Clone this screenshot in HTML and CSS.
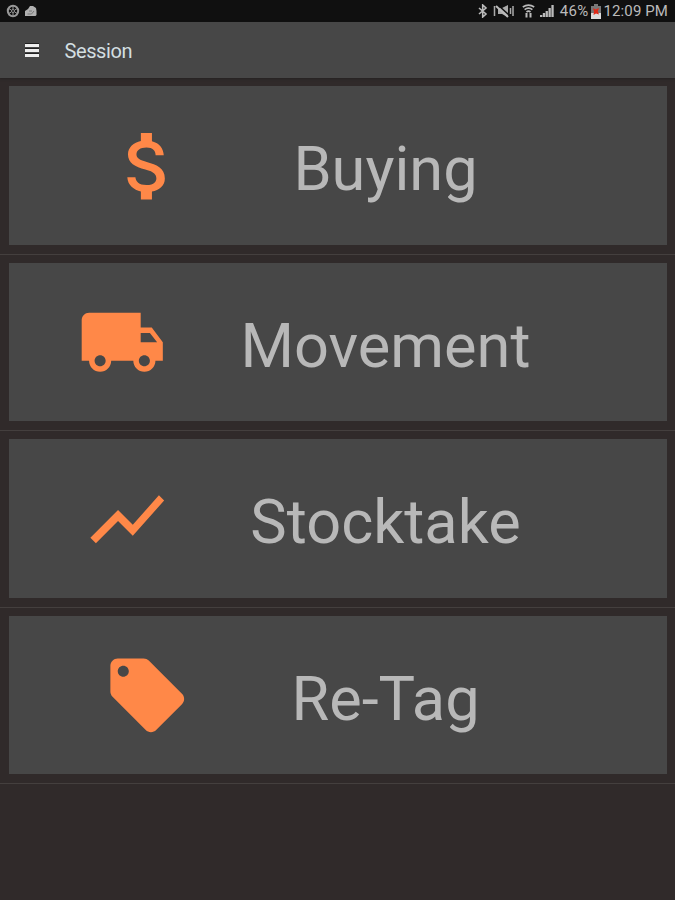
FILE: index.html
```html
<!DOCTYPE html>
<html lang="en">
<head>
    <meta charset="UTF-8">
    <meta name="viewport" content="width=device-width, initial-scale=1.0">
    <title>Session</title>
    <link rel="stylesheet" href="styles.css">
</head>
<body>
    <div class="status-bar">
        <div class="status-left">
            <svg width="14" height="14" viewBox="0 0 14 14" fill="none" stroke="#999">
                <circle cx="7" cy="7" r="5.2" stroke-width="2"/>
                <circle cx="7" cy="7" r="1.5"/>
                <path d="M7 2v3M7 9v3M2.7 4.5l2.6 1.5M8.7 8l2.6 1.5M2.7 9.5L5.3 8M8.7 6l2.6-1.5"/>
            </svg>
            <svg width="12" height="12" viewBox="0 0 12 12">
                <path d="M0 11V6l3-2 2-3h3l3 2 .5 3v4l-1 1z" fill="#b0b0b0"/>
                <path d="M2.500 9h4l2.500-3M4 6h3" stroke="#777" fill="none"/>
            </svg>
        </div>
        <div class="status-right">
            <svg class="bluetooth" width="10" height="14" viewBox="0 0 10 14" fill="none" stroke="#bbb" stroke-width="1.6">
                <path d="M1 4l7 6-3.300 3V1L8 4l-7 6"/>
            </svg>
            <svg class="mute" width="22" height="14" viewBox="0 0 22 14">
                <path d="M1.500 2v10M20 2v10M17.500 4v6" stroke="#aaa" stroke-width="1.500"/>
                <path d="M5 4h4l6-3v12l-6-3H5z" fill="#aaa"/>
                <path d="M5 1l11 10" stroke="#111" stroke-width="1.500"/>
                <path d="M3 2l12 11" stroke="#bbb" stroke-width="2"/>
            </svg>
            <svg class="wifi" width="13" height="14" viewBox="0 0 13 14" fill="none" stroke="#bbb" stroke-width="1.700">
                <path d="M.8 3q5.700-3.600 11.400 0M2.600 5.600q3.900-2.800 7.800 0M4.500 8q2-1.600 4 0"/>
                <path d="M4.500 9v4.500M8.500 9v4.500" stroke-width="2"/>
            </svg>
            <svg class="signal" width="14" height="14" viewBox="0 0 14 14" fill="#bbb">
                <path d="M0 13v-2h2.300v2zM2.800 13V9h2.300v4zM5.600 13V7h2.300v6zM8.500 13V4h2.300v9zM11.400 13V1h2.300v12z"/>
            </svg>
            <span class="battery-level">46%</span>
            <svg class="battery" width="10" height="15" viewBox="0 0 10 15">
                <path d="M3 0h4v2h3v13H0V2h3z" fill="#777"/>
                <path d="M0 9h10v6H0z" fill="#ddd"/>
                <path d="M2 4l2.500 1.500L8 4 6.800 7.300 8 10.500 5 9.500 2.500 11 3 7.500z" fill="#e02a18"/>
            </svg>
            <span class="clock">12:09 PM</span>
        </div>
    </div>

    <header class="toolbar">
        <div class="menu-button">
            <span></span>
            <span></span>
            <span></span>
        </div>
        <h1>Session</h1>
    </header>

    <main class="menu">
        <div class="row">
            <div class="card">
                <svg class="icon icon-buying" viewBox="0 0 24 24">
                    <path d="M11.800 10.900c-2.270-.59-3-1.200-3-2.150 0-1.090 1.010-1.850 2.700-1.850 1.780 0 2.440.85 2.500 2.100h2.210c-.07-1.720-1.120-3.300-3.210-3.810V3h-3v2.160c-1.940.42-3.500 1.680-3.500 3.610 0 2.310 1.910 3.460 4.700 4.130 2.500.6 3 1.480 3 2.410 0 .69-.49 1.790-2.700 1.790-2.060 0-2.870-.92-2.980-2.100h-2.200c.12 2.190 1.760 3.420 3.680 3.830V21h3v-2.150c1.950-.37 3.500-1.500 3.500-3.550 0-2.840-2.430-3.810-4.700-4.400z"/>
                </svg>
                <span class="label">Buying</span>
            </div>
        </div>
        <div class="row">
            <div class="card">
                <svg class="icon icon-movement" viewBox="0 0 24 24">
                    <path d="M20 8h-3V4H3c-1.100 0-2 .9-2 2v11h2c0 1.660 1.340 3 3 3s3-1.340 3-3h6c0 1.660 1.340 3 3 3s3-1.340 3-3h2v-5l-3-4zM6 18.500c-.83 0-1.500-.67-1.500-1.500s.67-1.500 1.500-1.500 1.500.67 1.500 1.500-.67 1.500-1.500 1.500zm13.500-9l1.960 2.500H17V9.500h2.500zm-1.500 9c-.83 0-1.500-.67-1.500-1.500s.67-1.500 1.500-1.500 1.500.67 1.500 1.500-.67 1.500-1.500 1.500z"/>
                </svg>
                <span class="label">Movement</span>
            </div>
        </div>
        <div class="row">
            <div class="card">
                <svg class="icon icon-stocktake" viewBox="0 0 24 24">
                    <path d="M3.500 18.490l6-6.010 4 4L22 6.920l-1.410-1.410-7.090 7.970-4-4L2 16.990z"/>
                </svg>
                <span class="label">Stocktake</span>
            </div>
        </div>
        <div class="row">
            <div class="card">
                <svg class="icon icon-retag" viewBox="0 0 24 24">
                    <path d="M21.410 11.580l-9-9C12.050 2.220 11.550 2 11 2H4c-1.100 0-2 .9-2 2v7c0 .55.22 1.050.59 1.420l9 9c.36.36.86.58 1.410.58.55 0 1.050-.22 1.410-.59l7-7c.37-.36.59-.86.59-1.410 0-.55-.23-1.060-.59-1.420zM5.500 7C4.670 7 4 6.330 4 5.500S4.670 4 5.500 4 7 4.670 7 5.500 6.330 7 5.500 7z"/>
                </svg>
                <span class="label">Re-Tag</span>
            </div>
        </div>
    </main>
</body>
</html>
```
FILE: styles.css
```css
body {
    margin: 0;
    min-height: 100vh;
    background-color: #302a2a;
    font-family: Roboto, sans-serif;
    overflow: hidden;
}
.status-bar {
    display: flex;
    justify-content: space-between;
    height: 22px;
    padding: 0 7px 0 6px;
    box-sizing: border-box;
    background-color: #101010;
    color: #bbb;
    font-size: 15px;
}
.status-left, .status-right {
    display: flex;
    align-items: center;
}
.status-left {
    gap: 5px;
}
.bluetooth {
    margin-right: 5px;
}
.mute {
    margin-right: 7px;
}
.wifi {
    margin-right: 5px;
}
.signal {
    margin-right: 6px;
}
.battery {
    margin: 0 3px 0 2px;
}
.battery-level, .clock {
    white-space: nowrap;
    line-height: 22px;
}
.battery-level {
    letter-spacing: 0.3px;
}
.clock {
    letter-spacing: 0.1px;
}
.toolbar {
    display: flex;
    align-items: center;
    height: 56px;
    padding-left: 25px;
    background-color: #474747;
    box-shadow: 0 1px 2px #252222;
}
.menu-button {
    display: flex;
    flex-direction: column;
    gap: 2px;
    width: 14px;
    margin-right: 25.5px;
}
.menu-button span {
    height: 3px;
    background-color: #eee;
    box-shadow: 0 -1px 0 #222;
}
.toolbar h1 {
    margin: 2px 0 0;
    color: #d3dfe1;
    font-size: 20px;
    font-weight: 400;
    letter-spacing: -0.4px;
}
.row {
    height: 176.6px;
    padding: 8px 8px 9px 9px;
    box-sizing: border-box;
    border-bottom: 1px solid #443f3e;
}
.card {
    display: grid;
    grid-template-columns: 184px 385px;
    align-items: center;
    height: 100%;
    background-color: #474747;
}
.icon {
    width: 88.5px;
    height: 88.5px;
    margin-top: 1px;
    fill: #ff8848;
}
.icon-buying {
    margin-left: 95px;
}
.icon-movement {
    margin-left: 68.5px;
}
.icon-stocktake {
    margin-left: 73.5px;
}
.icon-retag {
    margin-left: 94px;
}
.label {
    padding-top: 8px;
    color: #b8b8b8;
    font-size: 61.3px;
    line-height: 74px;
    text-align: center;
}
```
